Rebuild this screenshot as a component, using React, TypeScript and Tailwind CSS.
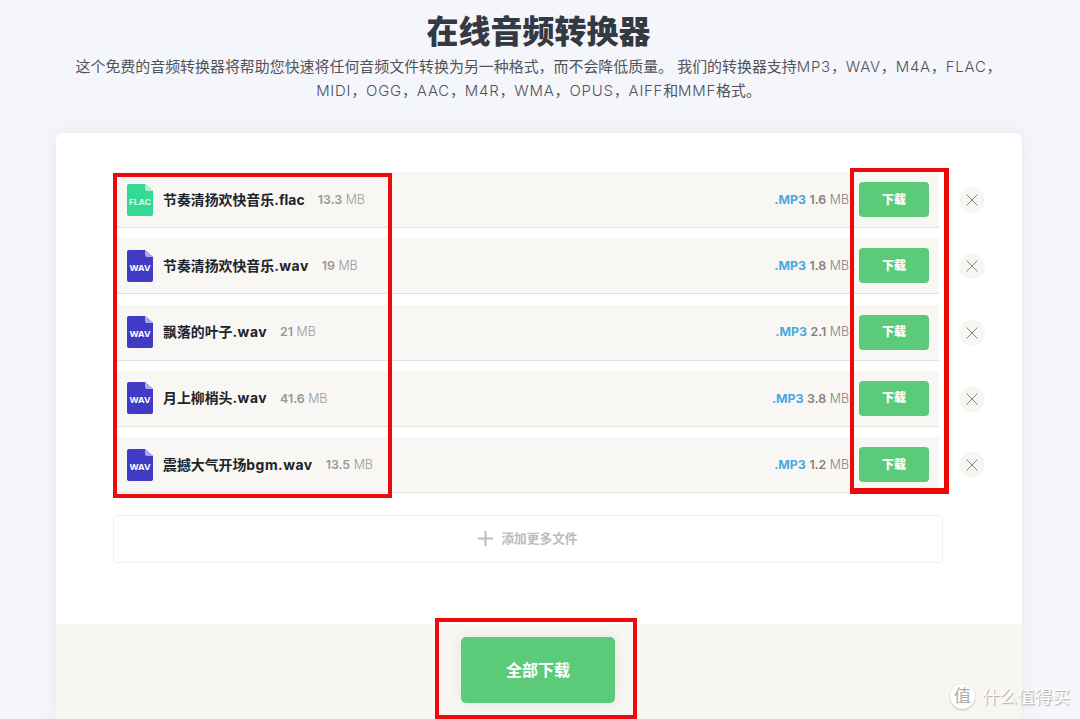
type AudioFile = {
  name: string;
  suffix: string;
  ext: "flac" | "wav";
  size: string;
  result: string;
};

const files: AudioFile[] = [
  { name: "节奏清扬欢快音乐", suffix: ".flac", ext: "flac", size: "13.3", result: "1.6" },
  { name: "节奏清扬欢快音乐", suffix: ".wav", ext: "wav", size: "19", result: "1.8" },
  { name: "飘落的叶子", suffix: ".wav", ext: "wav", size: "21", result: "2.1" },
  { name: "月上柳梢头", suffix: ".wav", ext: "wav", size: "41.6", result: "3.8" },
  { name: "震撼大气开场", suffix: "bgm.wav", ext: "wav", size: "13.5", result: "1.2" },
];

function FileIcon({ ext }: { ext: AudioFile["ext"] }) {
  const flac = ext === "flac";
  return (
    <svg width="26" height="32" viewBox="0 0 26 32" className="shrink-0">
      <path
        d="M2 0H18L26 7V30Q26 32 24 32H2Q0 32 0 30V2Q0 0 2 0Z"
        fill={flac ? "#35d996" : "#3f3bc5"}
      />
      <path d="M18 0L26 7H20Q18 7 18 5Z" fill={flac ? "#a5f0d0" : "#aaa8ea"} />
      <text
        x="13"
        y="21"
        textAnchor="middle"
        textLength={flac ? 22 : 21}
        lengthAdjust="spacingAndGlyphs"
        fill={flac ? "#d9faeb" : "#fff"}
        className="font-[Inter,sans-serif] text-[8px] font-bold"
      >
        {ext.toUpperCase()}
      </text>
    </svg>
  );
}

function FileRow({ file }: { file: AudioFile }) {
  return (
    <li className="flex h-[56px] items-center">
      <div className="flex h-full w-[826px] items-center border-b border-[#e4e4e2] bg-[#f8f7f4] pr-[10px] pl-[14px]">
        <FileIcon ext={file.ext} />
        <span className="ml-[10px] text-[13.9px] leading-[20px] font-bold whitespace-nowrap text-[#202329]">
          {file.name}
          <span className={file.ext === "flac" ? "tracking-[0.1px]" : "tracking-[0.5px]"}>{file.suffix}</span>
        </span>
        <span className="ml-[13px] pt-px text-[12.4px] whitespace-nowrap text-[#989898]">
          <b className="font-semibold">{file.size}</b> <span className="font-light">MB</span>
        </span>
        <span className="ml-auto pt-px text-[12.4px] whitespace-nowrap text-[#85827c]">
          <b className="font-bold text-[#4ba9df]">.MP3</b> <b className="font-semibold">{file.result}</b>{" "}
          <span className="font-light">MB</span>
        </span>
        <button className="ml-[10px] h-[35px] w-[70px] rounded-[4px] bg-[#5bcb79] text-[12px] font-black text-white">
          下载
        </button>
      </div>
      <button className="ml-[20px] flex size-[26px] items-center justify-center rounded-full bg-[#f7f6f3]">
        <svg width="12" height="12" viewBox="0 0 12 12" stroke="#85827e" strokeWidth="1">
          <path d="M0.5 0.5L11.5 11.5M11.5 0.5L0.5 11.5" />
        </svg>
      </button>
    </li>
  );
}

function Latin({ children }: { children: string }) {
  return <span className="font-light tracking-[0.75px]">{children}</span>;
}

export default function App() {
  return (
    <main
      lang="zh-CN"
      className="relative flex h-[719px] w-[1080px] flex-col overflow-hidden bg-[#f5f6fb] font-[Inter,'Noto_Sans_CJK_SC',sans-serif]"
    >
      <header className="h-[133px] shrink-0 pt-[9px] pr-[3px] text-center">
        <h1 className="text-[32px] leading-[46px] font-black text-[#343943]">在线音频转换器</h1>
        <p className="text-[14.95px] leading-[24px] whitespace-nowrap text-[#505359]">
          这个免费的音频转换器将帮助您快速将任何音频文件转换为另一种格式，而不会降低质量。 我们的转换器支持
          <Latin>MP3</Latin>，<Latin>WAV</Latin>，<Latin>M4A</Latin>，<Latin>FLAC</Latin>，
          <br />
          <Latin>MIDI</Latin>，<Latin>OGG</Latin>，<Latin>AAC</Latin>，<Latin>M4R</Latin>，<Latin>WMA</Latin>，
          <Latin>OPUS</Latin>，<Latin>AIFF</Latin>和<Latin>MMF</Latin>格式。
        </p>
      </header>

      <section className="ml-[56px] flex w-[966px] grow flex-col rounded-t-[8px] bg-white shadow-[0_0_20px_rgba(40,50,70,0.07)]">
        <div className="h-[491px] shrink-0 pt-[39px] pl-[57px]">
          <ul className="flex flex-col gap-[10.3px]">
            {files.map((file) => (
              <FileRow key={file.name + file.ext} file={file} />
            ))}
          </ul>
          <button className="mt-[22px] flex h-[48px] w-[830px] items-center justify-center gap-[8px] rounded-[4px] border border-[#f0f0ef] pb-px text-[12.7px] font-bold text-[#bcbcba]">
            <svg width="15" height="15" viewBox="0 0 15 15" stroke="#bcbcba" strokeWidth="2">
              <path d="M7.5 0V15M0 7.5H15" />
            </svg>
            添加更多文件
          </button>
        </div>
        <footer className="flex grow justify-center bg-[#f7f6f1] pt-[13px] pr-[2px]">
          <button className="h-[66px] w-[154px] rounded-[5px] bg-[#5bcb79] pb-px text-[16px] font-bold text-white shadow-[0_0_14px_rgba(60,60,60,0.09)]">
            全部下载
          </button>
        </footer>
      </section>

      {/* highlight frames over the file names and the download buttons */}
      <div className="absolute top-[173px] left-[113px] h-[325px] w-[279px] border-4 border-[#ee0a0c]" />
      <div className="absolute top-[168px] left-[850px] h-[326px] w-[99px] border-4 border-r-[5px] border-b-[6px] border-[#ee0808]" />
      <div className="absolute top-[618px] left-[435px] h-[101px] w-[202px] border-4 border-[#ee0a0c]" />

      <div className="absolute top-[684px] left-[950px] flex items-center gap-[7px] text-white [text-shadow:1px_1px_1px_#aaa]">
        <span className="flex size-[25px] items-center justify-center rounded-full bg-white text-[17px] text-[#aaa] shadow-[0_1px_2px_#bbb] [text-shadow:none]">
          值
        </span>
        <span className="text-[17.6px] leading-[25px]">什么值得买</span>
      </div>
    </main>
  );
}
